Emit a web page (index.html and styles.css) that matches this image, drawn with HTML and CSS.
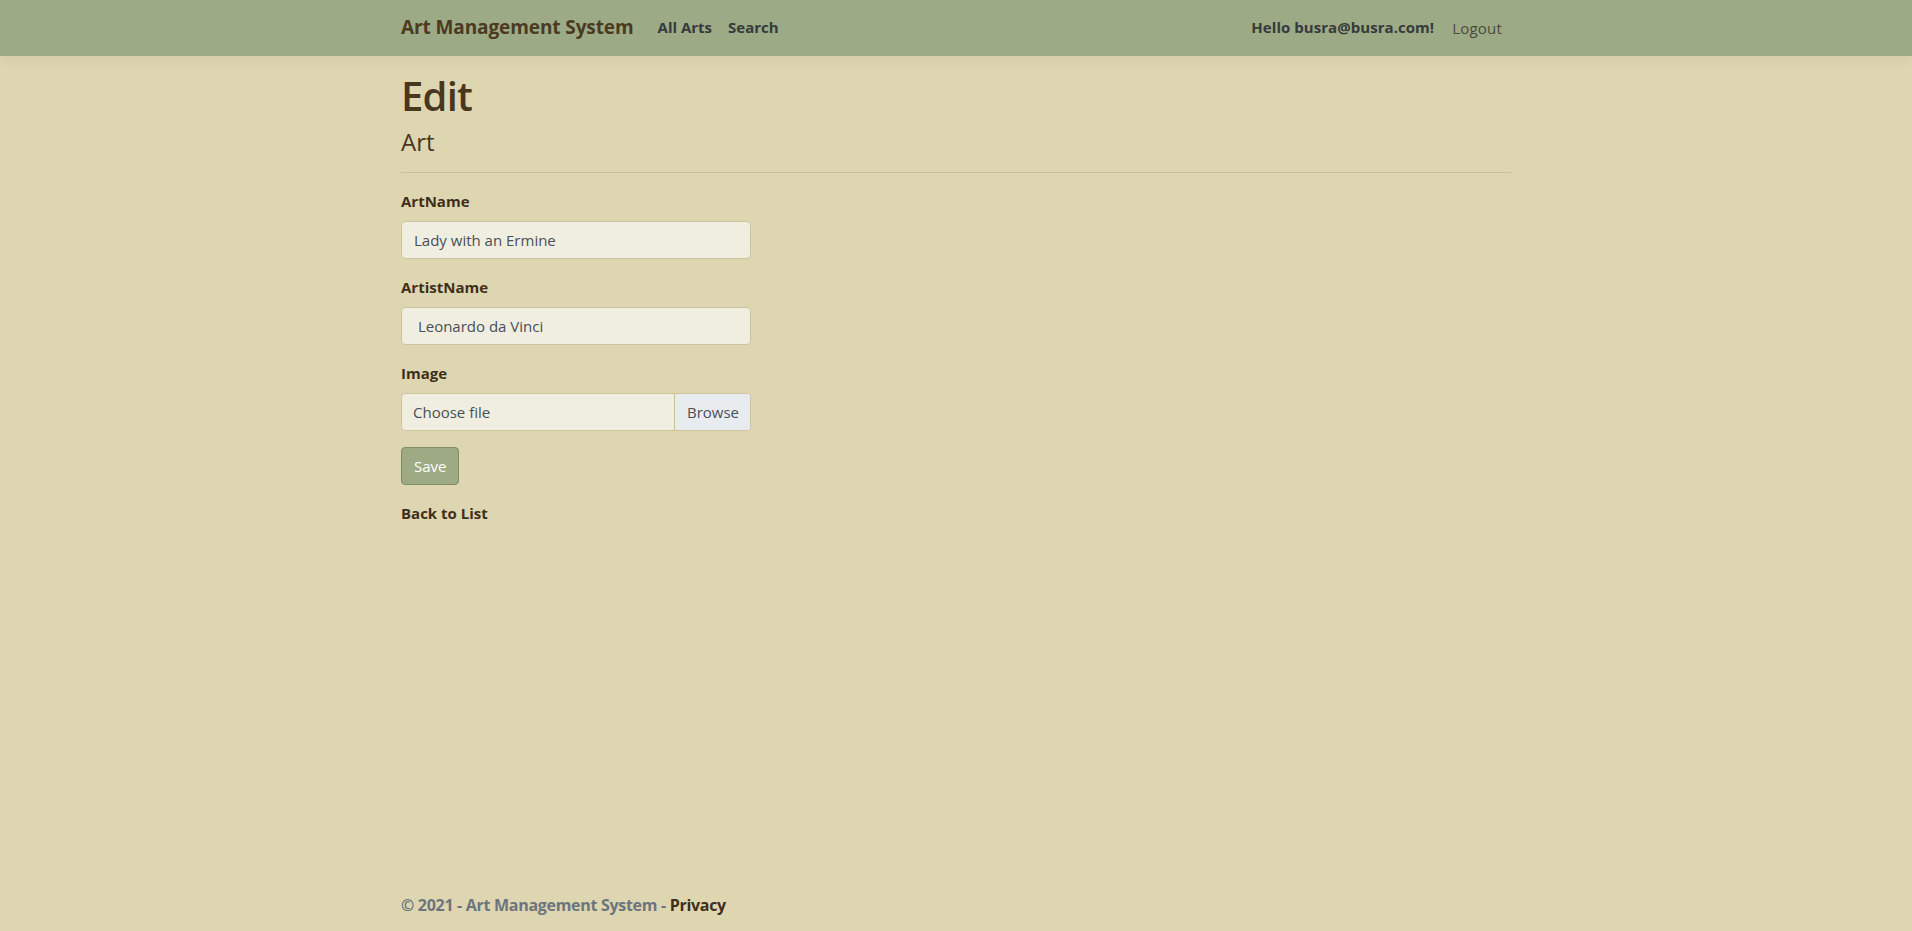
FILE: index.html
```html
<!DOCTYPE html>
<html lang="en">
<head>
<meta charset="utf-8">
<title>Edit - Art Management System</title>
<link rel="stylesheet" href="styles.css">
</head>
<body>
<div class="page">
  <header class="navbar">
    <div class="container nav-inner">
      <a class="brand" href="#">Art Management System</a>
      <ul class="nav-links">
        <li><a class="nav-link" href="#">All Arts</a></li>
        <li><a class="nav-link" href="#">Search</a></li>
      </ul>
      <ul class="nav-user">
        <li><a class="nav-link hello" href="#">Hello busra@busra.com!</a></li>
        <li><button class="logout" type="button">Logout</button></li>
      </ul>
    </div>
  </header>

  <main class="container main">
    <h1 class="title">Edit</h1>
    <h4 class="subtitle">Art</h4>
    <hr class="divider">
    <div class="row">
      <form class="col">
        <div class="form-group">
          <label class="label">ArtName</label>
          <input class="input" type="text" value="Lady with an Ermine">
        </div>
        <div class="form-group">
          <label class="label">ArtistName</label>
          <input class="input" type="text" value=" Leonardo da Vinci">
        </div>
        <div class="form-group">
          <label class="label">Image</label>
          <div class="file">
            <span class="file-text">Choose file</span>
            <span class="file-btn">Browse</span>
          </div>
        </div>
        <div class="form-group">
          <button class="btn-save" type="button">Save</button>
        </div>
      </form>
    </div>
    <div class="back">
      <a class="back-link" href="#">Back to List</a>
    </div>
  </main>

  <footer class="footer">
    <div class="container footer-inner">
      © 2021 - Art Management System - <a class="privacy" href="#">Privacy</a>
    </div>
  </footer>
</div>
</body>
</html>
```
FILE: styles.css
```css
* { box-sizing: border-box; }

html, body {
  margin: 0;
  padding: 0;
}

body {
  background: #ded6b1;
  color: #43331d;
  font-family: "Open Sans", "Noto Sans", sans-serif;
  font-size: 16px;
  line-height: 1.5;
}

.page {
  min-height: 100vh;
  display: flex;
  flex-direction: column;
}

.container {
  width: 1110px;
  margin: 0 auto;
}

a { text-decoration: none; }

/* Navbar */
.navbar {
  background: #9caa86;
  height: 56px;
  box-shadow: 0 4px 12px rgba(0, 0, 0, 0.05);
  margin-bottom: 16px;
}

.nav-inner {
  display: flex;
  align-items: center;
  height: 55px;
}

.brand {
  font-size: 19px;
  font-weight: 700;
  color: #4a3a22;
  margin-right: 16px;
  letter-spacing: -0.1px;
}

.nav-links, .nav-user {
  list-style: none;
  margin: 0;
  padding: 0;
  display: flex;
  align-items: center;
}

.nav-links { flex: 1; }

.nav-link {
  display: block;
  padding: 8px 8px;
  font-size: 15px;
  font-weight: 700;
  color: #363a3c;
}

.hello {
  padding-right: 10px;
  letter-spacing: 0.05px;
}

.logout {
  background: none;
  border: 0;
  padding: 8px 8px 8px 8px;
  font-family: inherit;
  font-size: 15px;
  color: #4b4b3c;
  letter-spacing: 0.2px;
  margin-right: 1px;
}

/* Main */
.main {
  padding-bottom: 16px;
}

.title {
  margin: 0 0 8px;
  font-size: 40px;
  line-height: 48px;
  font-weight: 600;
  color: #47371f;
  letter-spacing: -0.8px;
}

.subtitle {
  margin: 0 0 8px;
  font-size: 24px;
  line-height: 28px;
  font-weight: 500;
  color: #47371f;
}

.divider {
  margin: 16px 0;
  border: 0;
  border-top: 1px solid rgba(0, 0, 0, 0.1);
}

.row { display: flex; }

.col { width: 350px; }

.form-group { margin-bottom: 16px; }

.label {
  display: block;
  margin-bottom: 8px;
  font-size: 15px;
  line-height: 24px;
  font-weight: 700;
  color: #3f2f19;
}

.input {
  display: block;
  width: 100%;
  height: 38px;
  padding: 6px 12px;
  font-family: inherit;
  font-size: 15px;
  line-height: 24px;
  color: #495057;
  background: #f0eee0;
  border: 1px solid #cdc49e;
  border-radius: 4px;
}

.file {
  display: flex;
  height: 38px;
  background: #f0eee0;
  border: 1px solid #cdc49e;
  border-radius: 4px;
  overflow: hidden;
  font-size: 15px;
  line-height: 24px;
  color: #495057;
}

.file-text {
  flex: 1;
  padding: 6px 11px;
}

.file-btn {
  padding: 6px 11px 6px 12px;
  background: #e9ecef;
  border-left: 1px solid #cdc49e;
}

.btn-save {
  display: inline-block;
  height: 38px;
  padding: 6px 12px;
  font-family: inherit;
  font-size: 15px;
  line-height: 24px;
  color: #ffffff;
  background: #9daa84;
  border: 1px solid #7e8e66;
  border-radius: 4px;
}

.back { line-height: 24px; }

.back-link {
  font-size: 15px;
  font-weight: 700;
  color: #3f2f19;
}

/* Footer */
.footer {
  margin-top: auto;
  height: 60px;
}

.footer-inner {
  padding-top: 22px;
  line-height: 24px;
  font-size: 16px;
  font-weight: 700;
  color: #6c757d;
  letter-spacing: -0.3px;
  white-space: nowrap;
}

.privacy { color: #3f2f19; }
```
